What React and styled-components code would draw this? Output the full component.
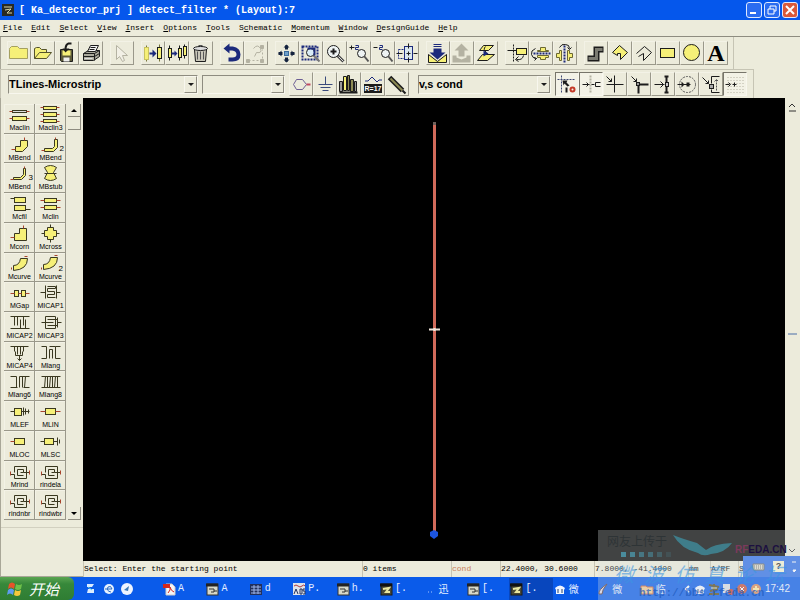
import styled, { createGlobalStyle } from 'styled-components';

const INK = '#1c1c1c';
const YELLOW = '#f6f078';
const NAVY = '#1c2a7c';
const GREY = '#b4b2a2';

const icons = {
  newFile: (
    <path d="M2 8V17H20V7H12L10 5H4L2 7Z" fill={YELLOW} stroke="#a5a060" />
  ),
  open: (
    <path d="M3 17V7L5 6H8L10 8H15V11M3 17L8 11H20L15 17Z" fill={YELLOW} stroke="#55532c" />
  ),
  save: (
    <>
      <path d="M5 8H17V20H6L5 19Z" fill="#5c5a3a" stroke={INK} />
      <rect x="7" y="9" width="8" height="5" fill={YELLOW} />
      <rect x="8" y="16" width="6" height="4" fill="#eee" />
      <path d="M16 2H13Q10 3 10 8" fill="none" stroke={INK} strokeWidth="2" />
      <path d="M7 7H14L10 11Z" fill={INK} />
    </>
  ),
  print: (
    <>
      <path d="M4 12L9 9H20V15L14 19H4Z" fill="#aaa99c" stroke={INK} />
      <path d="M8 10L11 4H19L16 10Z" fill="#f4f4f4" stroke={INK} />
      <path d="M4 12H15L20 9M4 15H15L20 12M15 12V19M11 6H16M10 8H15" stroke={INK} fill="none" />
      <path d="M5 17H13" stroke="#ddd" />
    </>
  ),
  pointer: (
    <path d="M6 4V18L9 15L12 20L14 19L12 14H17Z" fill="#f2f0e6" stroke={GREY} />
  ),
  copyOne: (
    <>
      <path d="M5 4V20M18 3V20" stroke="#77753a" />
      <rect x="3" y="6" width="4" height="12" fill={YELLOW} stroke="#c9c260" />
      <rect x="16" y="6" width="4" height="11" fill={YELLOW} stroke={INK} />
      <path d="M8 11H11V8L15 12L11 16V13H8Z" fill={NAVY} />
    </>
  ),
  copyMany: (
    <>
      <path d="M4 4V19M14 4V19M19 3V17" stroke={INK} />
      <rect x="3" y="7" width="3" height="9" fill={YELLOW} stroke={INK} />
      <rect x="13" y="7" width="3" height="9" fill={YELLOW} stroke={INK} />
      <rect x="18" y="5" width="3" height="9" fill={YELLOW} stroke={INK} />
      <path d="M6 11H9V9L12 12L9 15V13H6Z" fill={NAVY} />
    </>
  ),
  trash: (
    <>
      <path d="M5 8H17L16 20H6Z" fill="#c9c7b9" stroke={INK} />
      <ellipse cx="11" cy="7" rx="7" ry="2" fill="#ddd" stroke={INK} />
      <path d="M9 4H13M8 10V18M11 10V18M14 10V18" stroke="#555" />
    </>
  ),
  undo: (
    <>
      <path d="M6 7H12Q18 8 18 13Q18 18 12 18H8" fill="none" stroke={NAVY} strokeWidth="4" />
      <path d="M3 7L9 2V12Z" fill={NAVY} />
    </>
  ),
  redo: (
    <g stroke={GREY} fill="none">
      <path d="M9 7Q13 2 16 7Q18 12 12 11L10 15" />
      <path d="M4 19H18V8" strokeDasharray="2 2" />
      <path d="M2 18H5V21H2ZM16 18H19V21H16ZM16 4H19V7H16Z" fill={GREY} />
    </g>
  ),
  pan: (
    <>
      <rect x="9" y="10" width="4" height="4" fill="#6fa0c8" stroke="#3a6a9c" />
      <path d="M11 4V8M11 16V20M3 12H7M15 12H19" stroke="#14233f" strokeWidth="3" />
      <path d="M11 3L14 6H8ZM11 21L14 18H8ZM3 12L6 9V15ZM19 12L16 9V15Z" fill="#14233f" />
    </>
  ),
  zoomArea: (
    <>
      <path d="M3 5H18V18H3Z" fill="none" stroke={NAVY} strokeWidth="2" strokeDasharray="2 1" />
      <circle cx="11" cy="11" r="4" fill="#d9ecf7" stroke={INK} />
      <path d="M14 14L20 20" stroke="#777" strokeWidth="2" />
      <path d="M8 7H15V14" fill="none" stroke={NAVY} strokeWidth="2" />
    </>
  ),
  zoomIn: (
    <>
      <circle cx="10" cy="10" r="6" fill="#eef3f3" stroke={INK} />
      <path d="M7 10H13M10 7V13" stroke={INK} strokeWidth="2" />
      <path d="M14 14L20 20" stroke="#444" strokeWidth="3" />
      <path d="M15 15L20 20" stroke="#ddd" />
    </>
  ),
  zoomPlus: (
    <>
      <path d="M2 6H7M4 4V8" stroke={INK} />
      <path d="M8 4H11V6H8V8H11" fill="none" stroke={NAVY} />
      <circle cx="14" cy="12" r="4" fill="#eef3f3" stroke={INK} />
      <path d="M17 15L21 20" stroke="#555" strokeWidth="2" />
    </>
  ),
  zoomMinus: (
    <>
      <path d="M2 6H6" stroke={INK} />
      <path d="M8 4H11V6H8V8H11" fill="none" stroke={NAVY} />
      <circle cx="14" cy="12" r="4" fill="#eef3f3" stroke={INK} />
      <path d="M17 15L21 20" stroke="#555" strokeWidth="2" />
    </>
  ),
  fit: (
    <>
      <rect x="3" y="8" width="11" height="9" fill="none" stroke={NAVY} strokeDasharray="2 1" />
      <rect x="9" y="5" width="8" height="13" fill="#dbe8ef" stroke={NAVY} />
      <path d="M13 2V7M13 16V21M1 12H7M18 12H22M11 12H15M13 10V14" stroke={INK} />
    </>
  ),
  pushDown: (
    <>
      <path d="M2 13L11 20L20 13V21H2Z" fill={YELLOW} stroke={INK} />
      <path d="M7 7H15V11H19L11 18L3 11H7Z" fill={NAVY} />
      <path d="M7 3H15M7 5H15" stroke={NAVY} />
    </>
  ),
  popUp: (
    <g fill={GREY}>
      <path d="M2 14H6V16L11 18L16 16V14H20V21H2Z" />
      <path d="M11 2L18 9H14V15H8V9H4Z" />
    </g>
  ),
  sheet: (
    <>
      <path d="M9 4H19L14 9H5Z" fill={YELLOW} stroke={INK} />
      <path d="M8 13H20L13 19H3Z" fill={YELLOW} stroke={INK} />
      <path d="M11 5Q8 8 12 11" fill="none" stroke={INK} />
      <path d="M9 9L14 12L9 15Z" fill={NAVY} />
    </>
  ),
  rotate: (
    <>
      <rect x="11" y="7" width="10" height="6" fill={YELLOW} stroke={INK} />
      <path d="M8 3V20" stroke={INK} strokeDasharray="2 1" />
      <path d="M2 9H11" stroke={INK} />
      <path d="M18 14Q17 19 11 18M13 15L10 18L13 20" fill="none" stroke={INK} />
    </>
  ),
  mirrorX: (
    <>
      <path d="M8 9H11V6H16V9H19V10H8ZM8 14H19V16H16V18H11V16H8Z" fill={YELLOW} stroke="#6b6832" />
      <path d="M4 12H21" stroke={NAVY} strokeDasharray="2 1" strokeWidth="2" />
      <path d="M6 7Q1 9 2 13Q3 17 7 17M4 16L7 17L5 19" fill="none" stroke={INK} />
    </>
  ),
  mirrorY: (
    <>
      <path d="M8 9V19H6V16H3V12H6V9ZM14 9V19H16V16H19V12H16V9Z" fill={YELLOW} stroke="#6b6832" />
      <path d="M11 4V22" stroke={NAVY} strokeDasharray="2 1" strokeWidth="2" />
      <path d="M6 6Q8 2 12 3Q16 3 16 7M14 6L16 8L18 6" fill="none" stroke={INK} />
    </>
  ),
  trace: (
    <>
      <path d="M3 17H12V8H19" fill="none" stroke={INK} strokeWidth="6" />
      <path d="M4 17H12V8H18" fill="none" stroke="#7b7b72" strokeWidth="3" />
    </>
  ),
  polygon: (
    <path d="M4 11L11 4L19 11L12 18V12H9V14Z" fill={YELLOW} stroke={INK} strokeWidth="1" />
  ),
  polyline: (
    <path d="M4 12L12 5L19 11L11 19V12L6 15" fill="none" stroke={INK} strokeWidth="1" />
  ),
  rectangle: (
    <rect x="4" y="7" width="14" height="9" fill={YELLOW} stroke={INK} />
  ),
  circle: (
    <circle cx="11" cy="11" r="8" fill={YELLOW} stroke={INK} />
  ),
  port: (
    <>
      <path d="M4 12L7 7H13L17 12L13 17H7Z" fill="none" stroke="#6d5f94" />
      <path d="M17 12H21" stroke="#c04a62" strokeWidth="2" />
    </>
  ),
  ground: (
    <path d="M12 4V12M5 12H19M7 15H17M9 18H15" stroke="#3a4a7c" fill="none" />
  ),
  library: (
    <>
      <path d="M2 9H5V19H2ZM17 9H19V19H17Z" fill="#999" stroke={INK} />
      <path d="M6 4H9V18H6Z" fill={YELLOW} stroke={INK} />
      <path d="M10 3H12V18H10ZM13 7H16V19H13Z" fill="#8c8a54" stroke={INK} />
      <path d="M2 20H20" stroke={INK} strokeWidth="2" />
    </>
  ),
  pencil: (
    <>
      <path d="M4 5L17 18" stroke={INK} strokeWidth="5" />
      <path d="M5 6L17 18" stroke="#8c8a54" strokeWidth="2" />
      <path d="M17 18L20 21" stroke={INK} strokeWidth="2" />
    </>
  ),
  snapPointer: (
    <>
      <path d="M6 3V21M2 7H20" stroke="#3a4470" strokeDasharray="2 1" />
      <path d="M7 8H12L11 10L14 13L12 14L9 11L8 13Z" fill={INK} />
      <path d="M11 15V20" stroke={INK} strokeWidth="2" />
      <circle cx="17" cy="17" r="2" fill="none" stroke="#c43a28" strokeWidth="2" />
    </>
  ),
  snapPin: (
    <>
      <path d="M11 3V21" stroke={GREY} strokeWidth="2" strokeDasharray="2 1" />
      <path d="M3 12H10M7 10L9 12L7 14M12 12H15M21 10H16V14H21" stroke={INK} fill="none" />
    </>
  ),
  snapCross: (
    <>
      <path d="M11 3V20M3 12H20" stroke={INK} />
      <path d="M3 4L8 9M8 6V9H5" stroke={INK} fill="none" />
    </>
  ),
  snapCorner: (
    <>
      <path d="M11 21V12H21" stroke={INK} strokeWidth="2" fill="none" />
      <path d="M4 4L9 9M9 6V9H6" stroke={INK} fill="none" />
      <rect x="9" y="10" width="3" height="3" fill="#999" stroke={INK} />
    </>
  ),
  snapEdge: (
    <>
      <path d="M15 4V20M13 4H17M13 20H17" stroke={INK} strokeWidth="2" />
      <path d="M3 12H13M9 9L12 12L9 15" stroke={INK} fill="none" />
      <rect x="14" y="10" width="3" height="4" fill="#ccc" stroke={INK} />
    </>
  ),
  snapCenter: (
    <>
      <circle cx="12" cy="12" r="8" fill="none" stroke="#555" strokeDasharray="2 1" />
      <path d="M2 12H15" stroke={INK} />
      <path d="M6 9L9 12L6 15ZM11 10H14V14H11Z" fill={INK} />
    </>
  ),
  snapVertex: (
    <>
      <path d="M3 5L9 11M9 8V11H6" stroke={INK} fill="none" />
      <rect x="10" y="12" width="4" height="4" fill="#aaa" stroke={INK} />
      <path d="M12 11V4H20M12 17V20H20" fill="none" stroke={INK} />
      <path d="M17 7V18M15 9L17 7L19 9" stroke="#555" strokeDasharray="2 1" fill="none" />
    </>
  ),
  snapGrid: (
    <>
      <path d="M4 5H20M4 8H20M4 11H20M4 14H20M4 17H20M4 20H20" stroke={GREY} strokeDasharray="1 2" />
      <path d="M2 12H6M5 10L7 12L5 14M9 12H13M11 10V14" stroke={INK} fill="none" />
    </>
  ),
};

const box = { fill: YELLOW, stroke: '#3a3820' };
const wire = { fill: 'none', stroke: '#3a3820' };
const spiral = (
  <>
    <path d="M10 12V6H22V18H10V14H6M19 15H13V9H19V12H25M16 12H19" {...wire} />
    <path d="M6 11V15M25 10V14" stroke="#a8442c" />
  </>
);

const glyphs = {
  maclin: (
    <>
      <rect x="8" y="7" width="14" height="2" fill="#ddd" stroke="#3a3820" />
      <rect x="8" y="13" width="14" height="4" {...box} />
      <path d="M5 8H8M22 8H25M5 15H8M22 15H25" stroke="#a8442c" />
    </>
  ),
  maclin3: (
    <>
      <rect x="8" y="3" width="13" height="3" {...box} />
      <rect x="8" y="9" width="13" height="4" {...box} />
      <rect x="8" y="16" width="13" height="3" {...box} />
      <path d="M5 4H8M21 4H24M5 11H8M21 11H24M5 18H8M21 18H24" stroke="#a8442c" />
    </>
  ),
  mbend: (
    <>
      <path d="M11 18V13H16V7H23V13L18 18Z" {...box} />
      <path d="M7 16H11M20 4V7" stroke="#a8442c" />
    </>
  ),
  mbend2: (
    <>
      <path d="M9 15H17L19 13V6H22V14L18 18H9Z" {...box} />
      <path d="M6 17H9M20 4V6" stroke="#a8442c" />
      <text x="24" y="17">2</text>
    </>
  ),
  mbend3: (
    <>
      <path d="M9 15H16L19 12V6H21V13L17 17H9Z" {...box} />
      <path d="M6 17H9M20 4V6" stroke="#a8442c" />
      <text x="24" y="17">3</text>
    </>
  ),
  mbstub: (
    <>
      <path d="M9 5Q15 1 21 5L18 10L21 16Q15 20 9 16L12 10Z" {...box} />
      <path d="M9 11H21" {...wire} />
    </>
  ),
  mcfil: (
    <>
      <rect x="10" y="5" width="11" height="5" {...box} />
      <rect x="10" y="13" width="11" height="5" {...box} />
      <path d="M6 6H10M21 17H26" stroke="#3a3820" />
    </>
  ),
  mclin: (
    <>
      <rect x="9" y="6" width="12" height="4" {...box} />
      <rect x="9" y="13" width="12" height="4" {...box} />
      <path d="M5 8H9M21 8H25M5 15H9M21 15H25" stroke="#a8442c" />
    </>
  ),
  mcorn: (
    <>
      <path d="M10 18V11H15V6H22V18Z" {...box} />
      <path d="M6 15H10M19 3V6" stroke="#a8442c" />
    </>
  ),
  mcross: (
    <>
      <path d="M12 5H18V8H21V14H18V17H12V14H9V8H12Z" {...box} />
      <path d="M6 11H9M21 11H24M15 2V5M15 17V20" stroke="#3a3820" />
    </>
  ),
  mcurve: (
    <>
      <path d="M9 18V13Q15 13 16 6H23Q23 17 9 18Z" {...box} />
      <path d="M7 15V17M20 4H23" stroke="#a8442c" />
    </>
  ),
  mcurve2: (
    <>
      <path d="M8 17V12Q14 12 15 5H22Q22 16 8 17Z" {...box} />
      <path d="M6 15V17M19 3H22" stroke="#a8442c" />
      <text x="23" y="18">2</text>
    </>
  ),
  mgap: (
    <>
      <rect x="10" y="9" width="4" height="6" {...box} />
      <rect x="17" y="9" width="4" height="6" {...box} />
      <path d="M6 12H10M14 12H17M21 12H25" stroke="#a8442c" />
    </>
  ),
  micap1: (
    <path d="M5 11H10M21 11H25M12 5H20V7H12V10H19V13H12V16H20M10 4V17M21 4V17" {...wire} />
  ),
  micap2: (
    <path d="M6 5H25M6 17H25M10 5V14M13 5V14M16 8V17M19 5V14M21 8V17" {...wire} />
  ),
  micap3: (
    <path d="M6 11H10M10 5V17H20V5H10M12 8H22M10 11H18M12 14H22M22 6V16M22 11H26" {...wire} />
  ),
  micap4: (
    <path d="M6 5H24M10 5V10M13 5V13M16 5V13M19 5V10M11 10V14H18V10M15 14V19M13 17L15 19L17 17" {...wire} />
  ),
  mlang: (
    <path d="M6 5H11V17M14 17V8H17V17M20 17V5H25M6 17H11M20 17H25M14 5H20" {...wire} />
  ),
  mlang6: (
    <path d="M6 6H12V17M15 6V17M18 6V17M21 6L20 17M6 17H13M15 6H25M19 17H25" {...wire} />
  ),
  mlang8: (
    <path d="M6 6H25M6 17H25M10 6L9 17M12 6V17M15 6L14 17M17 6V17M20 6L19 17M22 6V17" {...wire} />
  ),
  mlef: (
    <>
      <rect x="10" y="8" width="7" height="7" {...box} />
      <path d="M6 11H10M17 11H25M19 7V15M21 8V14M24 9V13" stroke="#3a3820" />
    </>
  ),
  mlin: (
    <>
      <rect x="10" y="8" width="10" height="6" {...box} />
      <path d="M5 11H10M20 11H25" stroke="#a8442c" />
    </>
  ),
  mloc: (
    <>
      <rect x="10" y="8" width="10" height="6" {...box} />
      <path d="M6 11H10" stroke="#a8442c" />
    </>
  ),
  mlsc: (
    <>
      <rect x="9" y="8" width="9" height="6" {...box} />
      <path d="M5 11H9M18 11H22M22 7V15M24 9V13" stroke="#3a3820" />
    </>
  ),
  spiral,
};

const menus = [
  'File', 'Edit', 'Select', 'View', 'Insert', 'Options', 'Tools',
  'Schematic', 'Momentum', 'Window', 'DesignGuide', 'Help',
];
const mnemonicAt = { Schematic: 1 };

const mainTools = [
  ['newFile', 'open', 'save', 'print'],
  ['pointer'],
  ['copyOne', 'copyMany', 'trash'],
  ['undo', 'redo'],
  ['pan', 'zoomArea', 'zoomIn', 'zoomPlus', 'zoomMinus', 'fit'],
  ['pushDown', 'popUp', 'sheet'],
  ['rotate', 'mirrorX', 'mirrorY'],
  ['trace', 'polygon', 'polyline', 'rectangle', 'circle', 'text'],
];
const insertTools = ['port', 'ground', 'library', 'variable', 'pencil'];
const snapTools = [
  'snapPointer', 'snapPin', 'snapCross', 'snapCorner',
  'snapEdge', 'snapCenter', 'snapVertex', 'snapGrid',
];
const pressed = ['snapPointer', 'snapPin', 'snapGrid'];

const parts = [
  ['Maclin', 'maclin'], ['Maclin3', 'maclin3'],
  ['MBend', 'mbend'], ['MBend', 'mbend2'],
  ['MBend', 'mbend3'], ['MBstub', 'mbstub'],
  ['Mcfil', 'mcfil'], ['Mclin', 'mclin'],
  ['Mcorn', 'mcorn'], ['Mcross', 'mcross'],
  ['Mcurve', 'mcurve'], ['Mcurve', 'mcurve2'],
  ['MGap', 'mgap'], ['MICAP1', 'micap1'],
  ['MICAP2', 'micap2'], ['MICAP3', 'micap3'],
  ['MICAP4', 'micap4'], ['Mlang', 'mlang'],
  ['Mlang6', 'mlang6'], ['Mlang8', 'mlang8'],
  ['MLEF', 'mlef'], ['MLIN', 'mlin'],
  ['MLOC', 'mloc'], ['MLSC', 'mlsc'],
  ['Mrind', 'spiral'], ['rindela', 'spiral'],
  ['rindnbr', 'spiral'], ['rindwbr', 'spiral'],
];

const tasks = [
  ['pdf', 'A'], ['app', 'A'], ['grid', 'd'], ['ads', 'P.'], ['app', 'h.'], ['dark', '[.'],
  ['dots', '迅'], ['app', '[.'], ['dark', '[.', true], ['paw', '微'], ['pen', '微'], ['folder', '临'],
];

const taskIcons = {
  pdf: (
    <>
      <path d="M4 2H10L13 5V13H4Z" fill="#f6f6f6" stroke="#ccc" />
      <path d="M1 2H8V6H1Z" fill="#d3281c" />
      <path d="M6 11Q9 8 8 5Q9 9 12 10" fill="none" stroke="#d3281c" />
    </>
  ),
  app: (
    <>
      <rect x="2" y="2" width="11" height="11" fill="#d8d8c8" stroke="#333" />
      <path d="M1 3H13" stroke="#222" strokeWidth="3" />
      <path d="M4 7H9V10H6M9 9H12" fill="none" stroke="#333" />
    </>
  ),
  dark: (
    <>
      <rect x="2" y="2" width="11" height="11" fill="#4a4a36" stroke="#1a1a1a" />
      <path d="M1 3H13" stroke="#111" strokeWidth="3" />
      <path d="M4 7L10 6L7 10H11" fill="none" stroke="#e8e6a0" strokeWidth="2" />
    </>
  ),
  grid: (
    <>
      <rect x="1" y="2" width="12" height="11" fill="#22305c" />
      <path d="M2 5H12M2 8H12M2 11H12M5 3V12M9 3V12" stroke="#9db4e8" />
    </>
  ),
  ads: (
    <>
      <rect x="1" y="1" width="12" height="12" fill="#dfe3ea" />
      <path d="M2 4Q4 2 6 4T10 4T13 4" fill="none" stroke="#b03a3a" />
      <path d="M2 12L4 7L6 12M8 7V12H10V7ZM13 7H11V9H13V12H11" fill="none" stroke="#22305c" />
    </>
  ),
  dots: <path d="M5 10H6M8 10H9" stroke="#a8c8ff" />,
  paw: (
    <>
      <path d="M2 6Q7 1 12 6L11 8V12H3V8Z" fill="#eef4ff" />
      <path d="M5 7V11M9 7V11" stroke="#22406c" />
    </>
  ),
  pen: <path d="M3 12Q2 8 11 2Q6 8 6 12Z" fill="#d8d4e8" stroke="#5a3a3a" />,
  folder: <path d="M1 4H6L7 5H13V12H1Z" fill="#f0c890" stroke="#c8603a" />,
};

const Icon = ({ name }) => (
  <svg width="22" height="22" viewBox="0.5 0.5 22 22" aria-hidden="true">{icons[name]}</svg>
);

const Tool = ({ name }) => (
  <ToolButton type="button" aria-label={name} $down={pressed.includes(name)}>
    {name === 'text' && <LetterA>A</LetterA>}
    {name === 'variable' && (
      <VarMark>
        <svg width="18" height="8" viewBox="0 0 18 8">
          <path d="M1 5H4L8 1L13 6L15 4H18" fill="none" stroke={NAVY} />
        </svg>
        <b>R=17</b>
      </VarMark>
    )}
    {icons[name] && <Icon name={name} />}
  </ToolButton>
);

const MenuLabel = ({ text }) => {
  const at = mnemonicAt[text] || 0;
  return (
    <MenuItem type="button">
      {text.slice(0, at)}<u>{text[at]}</u>{text.slice(at + 1)}
    </MenuItem>
  );
};

const Combo = ({ label, value, width }) => (
  <ComboBox $width={width}>
    <select aria-label={label} defaultValue={value}>
      <option>{value}</option>
    </select>
    <ComboArrow aria-hidden="true" />
  </ComboBox>
);

const App = () => {
  return (
    <Desktop>
      <GlobalStyle />
      <TitleBar>
        <svg width="12" height="12" viewBox="0 0 12 12">
          <rect width="12" height="12" fill="#2a2a22" />
          <path d="M2 3H10M3 6L9 5L5 9H10" fill="none" stroke="#d8d6a8" />
        </svg>
        <Title>[ Ka_detector_prj ] detect_filter * (Layout):7</Title>
        <WindowButton type="button" aria-label="minimize">
          <svg width="14" height="14"><path d="M3 10H9" stroke="#fff" strokeWidth="2" /></svg>
        </WindowButton>
        <WindowButton type="button" aria-label="restore">
          <svg width="14" height="14">
            <path d="M5 6V3H11V8H9M3 6H9V11H3Z" fill="none" stroke="#fff" />
          </svg>
        </WindowButton>
        <WindowButton type="button" aria-label="close" $close>
          <svg width="14" height="14"><path d="M3 3L11 11M11 3L3 11" stroke="#fff" strokeWidth="2" /></svg>
        </WindowButton>
      </TitleBar>

      <MenuBar>
        {menus.map((m) => <MenuLabel key={m} text={m} />)}
      </MenuBar>

      <MainToolbar>
        {mainTools.map((group) => (
          <ToolGroup key={group[0]}>
            {group.map((t) => <Tool key={t} name={t} />)}
          </ToolGroup>
        ))}
      </MainToolbar>

      <SecondToolbar>
        <Combo label="Palette" value="TLines-Microstrip" width={190} />
        <Combo label="Component" value="" width={83} />
        <ToolGroup>
          {insertTools.map((t) => <Tool key={t} name={t} />)}
        </ToolGroup>
        <LayerArea>
          <Combo label="Layer" value="v,s cond" width={133} />
          <ToolGroup>
            {snapTools.map((t) => <Tool key={t} name={t} />)}
          </ToolGroup>
        </LayerArea>
      </SecondToolbar>

      <Workspace>
        <Sidebar>
          <Palette>
            <PaletteGrid>
              {parts.map(([label, glyph], i) => (
                <PartButton type="button" key={i}>
                  <svg width="30" height="20" viewBox="0.5 0.5 30 20" aria-hidden="true">{glyphs[glyph]}</svg>
                  <span>{label}</span>
                </PartButton>
              ))}
            </PaletteGrid>
            <PaletteScroll>
              <ScrollArrow $up />
              <ScrollThumb />
              <ScrollSpace />
              <ScrollArrow />
            </PaletteScroll>
          </Palette>
          <SidebarFoot />
        </Sidebar>

        <MainColumn>
          <CanvasRow>
            <Canvas>
              <svg viewBox="0 0 702 463" aria-hidden="true">
                <rect x="350" y="26" width="3" height="409" fill="#d06a5a" />
                <rect x="350" y="24" width="3" height="3" fill="#6f625c" />
                <path d="M346 231.500H357M351.500 230V233" stroke="#f2e6dc" strokeWidth="2" />
                <path d="M351 432L355 434V438L351 441L347 438V434Z" fill="#1c55e0" />
              </svg>
            </Canvas>
            <CanvasScroll>
              <svg width="13" height="12"><path d="M3 7L6 4L9 7M3 11H10" fill="none" stroke="#333" /></svg>
              <svg width="13" height="12"><path d="M2 11H11" stroke="#4a6ea8" /></svg>
              <svg width="13" height="12"><path d="M3 4L6 7L9 4" fill="none" stroke="#333" /></svg>
            </CanvasScroll>
          </CanvasRow>
          <StatusBar>
            <StatusCell $grow>Select: Enter the starting point</StatusCell>
            <StatusCell $width={89}>0 items</StatusCell>
            <StatusCell $width={49} $color="#c8805a">cond</StatusCell>
            <StatusCell $width={94}>22.4000, 30.6000</StatusCell>
            <StatusCell $width={94}>7.8000, -41.4000</StatusCell>
            <StatusCell $width={22}>mm</StatusCell>
            <StatusCell $width={28}>A/RF</StatusCell>
            <StatusCell $width={62}>S</StatusCell>
          </StatusBar>
        </MainColumn>
      </Workspace>

      <TaskBar>
        <StartButton type="button">
          <svg width="17" height="16" viewBox="0 0 17 16">
            <path d="M2 3Q5 0 8 3L7 8Q4 5 1 8Z" fill="#e8532a" />
            <path d="M9 3Q12 5 15 3L14 8Q11 10 8 8Z" fill="#6fc04a" />
            <path d="M1 9Q4 6 7 9L6 14Q3 11 0 14Z" fill="#5f9cf0" />
            <path d="M8 9Q11 11 14 9L13 14Q10 16 7 14Z" fill="#f6c83a" />
          </svg>
          开始
        </StartButton>
        <QuickLaunch>
          <svg width="14" height="14">
            <path d="M3 2H10L8 5H3ZM4 7H10V11H3Z" fill="#dcecff" />
            <path d="M4 5L8 8" stroke="#5fd0e8" />
          </svg>
          <svg width="14" height="14">
            <circle cx="7" cy="7" r="5" fill="#e8f2ff" />
            <path d="M3 7H10Q9 3 6 5Q4 9 9 10" fill="none" stroke="#2a6ac0" />
          </svg>
          <svg width="14" height="14">
            <circle cx="7" cy="7" r="6" fill="#eef4ff" />
            <path d="M4 8L9 4L8 9Z" fill="#3a78b8" />
          </svg>
        </QuickLaunch>
        <Tasks>
          {tasks.map(([icon, label, active], i) => (
            <TaskButton type="button" key={i} $active={active}>
              <svg width="14" height="14" aria-hidden="true">{taskIcons[icon]}</svg>
              {label}
            </TaskButton>
          ))}
        </Tasks>
        <Tray>
          <svg width="10" height="14"><path d="M6 4L3 7L6 10" fill="none" stroke="#fff" strokeWidth="2" /></svg>
          <svg width="14" height="14">{taskIcons.paw}</svg>
          <svg width="14" height="14">
            <path d="M2 3L12 5M3 9L11 7M2 12H12M7 2V12" stroke="#5a4a1c" strokeWidth="2" />
            <path d="M4 6H10" stroke="#f2e29a" />
          </svg>
          <svg width="14" height="14">
            <rect x="2" y="2" width="7" height="9" fill="#d8dce4" />
            <circle cx="10" cy="10" r="3" fill="#c8402c" />
          </svg>
          <svg width="14" height="14">
            <circle cx="7" cy="7" r="5" fill="#c8503c" />
            <path d="M5 5L9 9M9 5L5 9" stroke="#fff" />
          </svg>
          <svg width="14" height="14">
            <circle cx="7" cy="7" r="5" fill="#d88a5c" />
            <path d="M4 7H10M7 4V10" stroke="#ffe9a0" strokeWidth="2" />
          </svg>
          <time>17:42</time>
        </Tray>
      </TaskBar>

      <LanguageBar>
        <svg width="13" height="10">
          <path d="M1 2H12V8H1Z" fill="#e0ddcc" stroke="#666" />
          <path d="M2 4H11M2 6H11" stroke="#666" strokeDasharray="1 1" />
        </svg>
        <HelpMark>?</HelpMark>
        <svg width="5" height="14"><path d="M0 2H4M1 10H4L2 12Z" stroke="#fff" fill="#fff" /></svg>
      </LanguageBar>

      <Watermark>
        <WatermarkTop>
          <Credit>
            网友上传于
            <Squares>
              {[1, 0.9, 0.7, 0.6, 0.4, 0.2].map((o) => <i key={o} style={{ opacity: o }} />)}
            </Squares>
          </Credit>
          <svg width="64" height="26" viewBox="0 0 64 26">
            <path d="M2 1Q12 5 26 9L35 16Q42 10 61 9Q54 19 40 20Q32 23 27 19Q10 15 2 1Z" fill="#3f8c9c" opacity="0.8" />
          </svg>
          <Site><em>RF</em>EDA.CN</Site>
        </WatermarkTop>
        <Forum>{[...'微波仿真论坛'].map((c) => <span key={c}>{c}</span>)}</Forum>
        <Url>http://bbs.rfeda.cn</Url>
      </Watermark>
    </Desktop>
  );
};
export default App;

const GlobalStyle = createGlobalStyle`
  * {
    box-sizing: border-box;
  }
  body {
    margin: 0;
    background: #ecebdb;
  }
  button, select {
    font: inherit;
    color: inherit;
    padding: 0;
    border: 0;
    border-radius: 0;
    background: none;
  }
  svg {
    display: block;
    flex-shrink: 0;
  }
`;

const Desktop = styled.div`
  position: relative;
  display: flex;
  flex-direction: column;
  min-height: 100vh;
  overflow: hidden;
  background: #ecebdb;
  color: #000;
  font-family: 'Liberation Mono', 'Noto Sans CJK SC', monospace;
  font-size: 8px;
`;

const TitleBar = styled.header`
  display: flex;
  align-items: center;
  gap: 2px;
  height: 20px;
  padding: 0 2px;
  background: #0557ec;
  color: #fff;
`;

const Title = styled.h1`
  flex: 1;
  margin: 0 0 0 3px;
  font-size: 10px;
  font-weight: bold;
  white-space: pre;
`;

const WindowButton = styled.button`
  display: grid;
  place-items: center;
  width: 16px;
  height: 16px;
  border: 1px solid #dfe9ff;
  border-radius: 3px;
  background: ${({ $close }) => ($close ? '#d9593a' : '#2a6cf0')};
`;

const MenuBar = styled.nav`
  display: flex;
  gap: 9px;
  height: 17px;
  padding: 0 3px;
  border-bottom: 1px solid #8e8c80;
`;

const MenuItem = styled.button`
  line-height: 16px;
`;

const MainToolbar = styled.div`
  display: flex;
  gap: 7px;
  width: fit-content;
  padding: 4px 5px 4px 6px;
  border-left: 1px solid #a9a798;
  border-right: 1px solid #c6c4b4;
`;

const SecondToolbar = styled.div`
  display: flex;
  align-items: center;
  gap: 4px;
  width: fit-content;
  height: 29px;
  padding: 0 6px 0 7px;
  border: 0 solid #c6c4b4;
  border-width: 1px 1px 0 1px;
`;

const ToolGroup = styled.div`
  display: flex;
`;

const LayerArea = styled.div`
  display: flex;
  align-items: center;
  gap: 4px;
  margin-left: 5px;
`;

const ToolButton = styled.button`
  display: grid;
  place-items: center;
  width: 24px;
  height: 24px;
  overflow: hidden;
  border: 1px solid;
  border-color: ${({ $down }) =>
    $down ? '#77756a #f8f7ee #f8f7ee #77756a' : '#f3f2e6 #9a988a #9a988a #f3f2e6'};
  background: ${({ $down }) => ($down ? '#f3f2e6' : 'transparent')};
`;

const LetterA = styled.span`
  font: bold 24px/22px 'Liberation Serif', serif;
`;

const VarMark = styled.span`
  display: flex;
  flex-direction: column;
  align-items: center;
  b {
    padding: 0 1px;
    background: #1c1c1c;
    color: #fff;
    font: bold 7px/9px 'Liberation Sans', sans-serif;
  }
`;

const ComboBox = styled.div`
  display: flex;
  align-items: stretch;
  width: ${({ $width }) => $width}px;
  height: 19px;
  border: 1px solid;
  border-color: #8e8c80 #f8f7ee #f8f7ee #8e8c80;
  select {
    flex: 1;
    min-width: 0;
    appearance: none;
    font: bold 11px 'Liberation Sans', sans-serif;
  }
`;

const ComboArrow = styled.span`
  display: grid;
  place-items: center;
  width: 13px;
  border: 1px solid;
  border-color: #f8f7ee #8e8c80 #8e8c80 #f8f7ee;
  pointer-events: none;
  &::after {
    content: '';
    border: 3px solid transparent;
    border-top-color: #1c1c1c;
    border-bottom: 0;
  }
`;

const Workspace = styled.div`
  display: flex;
  flex: 1;
`;

const Sidebar = styled.aside`
  display: flex;
  flex-direction: column;
  width: 83px;
  border-left: 1px solid #a9a798;
`;

const Palette = styled.div`
  display: flex;
  flex: 1;
  gap: 2px;
  padding: 6px 2px 0 3px;
`;

const PaletteGrid = styled.div`
  display: grid;
  grid-template-columns: 31px 31px;
  grid-template-rows: repeat(14, 1fr);
`;

const PartButton = styled.button`
  display: flex;
  flex-direction: column;
  align-items: center;
  min-height: 0;
  box-shadow: inset -1px -1px #9a988a, inset 1px 1px #f3f2e6;
  font: 7px/8px 'Liberation Sans', sans-serif;
  color: #000;
  text {
    font-size: 8px;
  }
`;

const PaletteScroll = styled.div`
  display: flex;
  flex-direction: column;
  width: 13px;
`;

const ScrollArrow = styled.div`
  display: grid;
  place-items: center;
  height: 13px;
  border-right: 1px solid #8e8c80;
  border-bottom: 1px solid #8e8c80;
  &::after {
    content: '';
    border: 3px solid transparent;
    ${({ $up }) =>
      $up
        ? 'border-bottom-color: #000; border-top: 0;'
        : 'border-top-color: #000; border-bottom: 0;'}
  }
`;

const ScrollThumb = styled.div`
  height: 13px;
  border-right: 1px solid #8e8c80;
  border-bottom: 1px solid #8e8c80;
`;

const ScrollSpace = styled.div`
  flex: 1;
`;

const SidebarFoot = styled.div`
  height: 57px;
  padding-top: 7px;
  border-bottom: 1px solid #a9a798;
  &::before {
    content: '';
    display: block;
    border-top: 1px solid #d2d0c0;
  }
`;

const MainColumn = styled.main`
  display: flex;
  flex-direction: column;
  flex: 1;
  min-width: 0;
`;

const CanvasRow = styled.div`
  display: flex;
  flex: 1;
`;

const Canvas = styled.div`
  flex: 1;
  min-width: 0;
  background: #000;
  svg {
    width: 100%;
  }
`;

const CanvasScroll = styled.div`
  display: flex;
  flex-direction: column;
  justify-content: space-between;
  width: 15px;
  padding: 2px 0 4px 1px;
`;

const StatusBar = styled.footer`
  display: flex;
  height: 16px;
`;

const StatusCell = styled.div`
  flex: ${({ $grow, $width }) => ($grow ? '1 1 0' : `0 0 ${$width}px`)};
  overflow: hidden;
  border-left: 1px solid #c6c4b4;
  color: ${({ $color }) => $color || '#000'};
  line-height: 16px;
  white-space: nowrap;
`;

const TaskBar = styled.div`
  display: flex;
  align-items: center;
  height: 23px;
  background: #0a5bea;
  color: #e4eeff;
  font-size: 10px;
`;

const StartButton = styled.button`
  display: flex;
  align-items: center;
  gap: 5px;
  width: 74px;
  height: 23px;
  padding-left: 7px;
  border-radius: 0 6px 6px 0;
  background: linear-gradient(#5aa552, #37883a 30%, #2f7d33);
  color: #fff;
  font: italic 15px 'Noto Sans CJK SC', sans-serif;
`;

const QuickLaunch = styled.div`
  display: flex;
  gap: 4px;
  padding-left: 10px;
  width: 88px;
`;

const Tasks = styled.div`
  display: flex;
  flex: 1;
`;

const TaskButton = styled.button`
  display: flex;
  align-items: center;
  gap: 2px;
  flex: 1;
  min-width: 0;
  height: 22px;
  overflow: hidden;
  background: ${({ $active }) => ($active ? '#0846bd' : 'transparent')};
  white-space: nowrap;
`;

const Tray = styled.div`
  display: flex;
  align-items: center;
  padding-right: 10px;
  time {
    font: 10px 'Liberation Sans', sans-serif;
    padding-left: 2px;
  }
`;

const LanguageBar = styled.div`
  position: absolute;
  right: 0;
  bottom: 23px;
  display: flex;
  align-items: center;
  justify-content: flex-end;
  gap: 8px;
  width: 57px;
  height: 21px;
  padding-right: 3px;
  background: #2f6fe8;
`;

const HelpMark = styled.span`
  width: 11px;
  background: #f6f4d4;
  color: #222;
  font: bold 9px/11px 'Liberation Sans', sans-serif;
  text-align: center;
`;

const Watermark = styled.div`
  position: absolute;
  right: 0;
  bottom: 0;
  width: 202px;
  height: 70px;
  padding: 4px 15px 0 9px;
  background: rgba(215, 222, 222, 0.3);
  pointer-events: none;
`;

const WatermarkTop = styled.div`
  display: flex;
  justify-content: space-between;
  height: 28px;
`;

const Credit = styled.div`
  color: #2e3436;
  font: 12px/14px 'Noto Sans CJK SC', sans-serif;
`;

const Squares = styled.div`
  display: flex;
  gap: 4px;
  padding: 4px 0 0 14px;
  i {
    width: 5px;
    height: 5px;
    background: #4a8c9c;
  }
`;

const Site = styled.strong`
  align-self: flex-end;
  color: #1c1040;
  font: bold 10px/24px 'Liberation Sans', sans-serif;
  em {
    color: #7c3a5c;
    font-style: normal;
  }
`;

const Forum = styled.div`
  display: flex;
  justify-content: space-between;
  padding: 0 0 0 7px;
  color: rgba(60, 150, 225, 0.6);
  font: italic 20px/24px 'Noto Sans CJK SC', sans-serif;
`;

const Url = styled.div`
  padding-left: 32px;
  color: rgba(30, 90, 190, 0.7);
  font: bold 11px/14px 'Liberation Mono', monospace;
`;
